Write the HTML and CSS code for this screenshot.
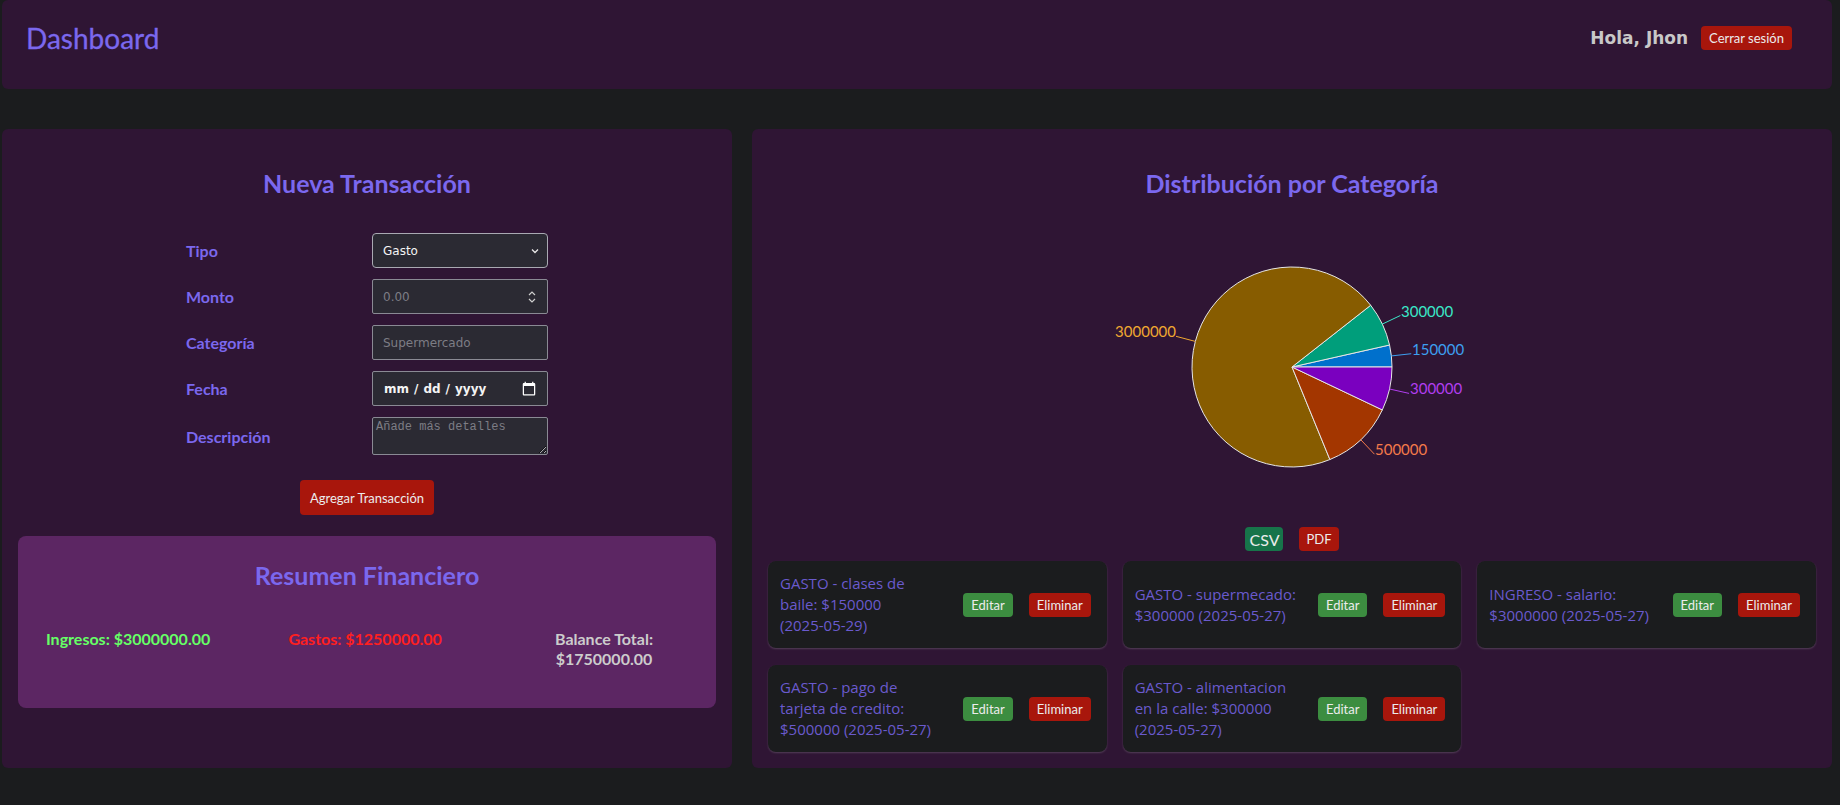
FILE: index.html
```html
<!DOCTYPE html>
<html lang="es">
<head>
<meta charset="utf-8">
<title>Dashboard</title>
<link rel="stylesheet" href="styles.css">
</head>
<body>
<div class="app">
  <header class="topbar">
    <h1 class="brand">Dashboard</h1>
    <div class="user">
      <span class="hello">Hola, Jhon</span>
      <button class="btn btn-red btn-sm" type="button">Cerrar sesión</button>
    </div>
  </header>

  <main class="main">
    <section class="panel panel-left">
      <h2 class="panel-title">Nueva Transacción</h2>
      <form class="tx-form">
        <label class="field-label" for="tipo">Tipo</label>
        <div class="control">
          <select id="tipo" class="field field-select"><option>Gasto</option><option>Ingreso</option></select>
          <svg class="field-icon chev" width="10" height="10" viewBox="0 0 10 10"><path d="M2 3.5 L5 6.5 L8 3.5" fill="none" stroke="#e8e8e8" stroke-width="1.3"/></svg>
        </div>

        <label class="field-label" for="monto">Monto</label>
        <div class="control">
          <input id="monto" class="field field-number" type="number" placeholder="0.00">
          <svg class="field-icon spin" width="10" height="16" viewBox="0 0 10 16"><path d="M2 6 L5 3 L8 6 M2 10 L5 13 L8 10" fill="none" stroke="#cfcfcf" stroke-width="1.2"/></svg>
        </div>

        <label class="field-label" for="cat">Categoría</label>
        <div class="control">
          <input id="cat" class="field" type="text" placeholder="Supermercado">
        </div>

        <label class="field-label" for="fecha">Fecha</label>
        <div class="control">
          <input id="fecha" class="field field-date" type="date">
        </div>

        <label class="field-label" for="desc">Descripción</label>
        <div class="control">
          <textarea id="desc" class="field field-area" placeholder="Añade más detalles"></textarea>
        </div>
      </form>
      <div class="form-actions">
        <button class="btn btn-red btn-lg" type="button">Agregar Transacción</button>
      </div>

      <div class="summary">
        <h3 class="summary-title">Resumen Financiero</h3>
        <div class="stats">
          <p class="stat stat-in">Ingresos: $3000000.00</p>
          <p class="stat stat-out">Gastos: $1250000.00</p>
          <p class="stat stat-bal">Balance Total: $1750000.00</p>
        </div>
      </div>
    </section>

    <section class="panel panel-right">
      <h2 class="panel-title">Distribución por Categoría</h2>
      <div class="chart">
        <svg class="pie" width="500" height="300" viewBox="0 0 500 300">
          <g stroke="#e6e6e6" stroke-width="1">
            <path d="M250,150 L350,150 A100,100 0 0 0 347.551,128.005 Z" fill="#0070cc"/>
            <path d="M250,150 L347.551,128.005 A100,100 0 0 0 328.674,88.273 Z" fill="#009e7b"/>
            <path d="M250,150 L328.674,88.273 A100,100 0 1 0 287.893,242.542 Z" fill="#875c00"/>
            <path d="M250,150 L287.893,242.542 A100,100 0 0 0 340.325,192.910 Z" fill="#a33600"/>
            <path d="M250,150 L340.325,192.910 A100,100 0 0 0 350,150 Z" fill="#7a00bf"/>
          </g>
          <g fill="none" stroke-width="1">
            <polyline points="349.386,138.935 369.263,136.722" stroke="#3d9ff0"/>
            <polyline points="340.325,107.090 358.390,98.508" stroke="#3ae8c8"/>
            <polyline points="153.328,124.416 133.994,119.299" stroke="#f0a830"/>
            <polyline points="318.709,222.658 332.451,237.190" stroke="#f47a4a"/>
            <polyline points="347.551,171.995 367.061,176.394" stroke="#b23ef0"/>
          </g>
          <g class="pie-labels">
            <text x="370" y="132" fill="#3d9ff0">150000</text>
            <text x="359" y="94" fill="#3ae8c8">300000</text>
            <text x="134" y="114" fill="#f0a830" text-anchor="end">3000000</text>
            <text x="333" y="232" fill="#f47a4a">500000</text>
            <text x="368" y="171" fill="#b23ef0">300000</text>
          </g>
        </svg>
      </div>
      <div class="exports">
        <button class="btn btn-csv" type="button">CSV</button>
        <button class="btn btn-red btn-pdf" type="button">PDF</button>
      </div>

      <div class="tx-grid">
        <div class="tx-card">
          <p class="tx-text"><span>GASTO - clases de baile: $150000</span> <span class="tx-keep">(2025-05-29)</span></p>
          <div class="tx-actions"><button class="btn btn-green" type="button">Editar</button><button class="btn btn-red" type="button">Eliminar</button></div>
        </div>
        <div class="tx-card">
          <p class="tx-text"><span>GASTO - supermecado:</span> <span class="tx-keep">$300000 (2025-05-27)</span></p>
          <div class="tx-actions"><button class="btn btn-green" type="button">Editar</button><button class="btn btn-red" type="button">Eliminar</button></div>
        </div>
        <div class="tx-card">
          <p class="tx-text"><span>INGRESO - salario:</span> <span class="tx-keep">$3000000 (2025-05-27)</span></p>
          <div class="tx-actions"><button class="btn btn-green" type="button">Editar</button><button class="btn btn-red" type="button">Eliminar</button></div>
        </div>
        <div class="tx-card">
          <p class="tx-text"><span>GASTO - pago de tarjeta de credito:</span> <span class="tx-keep">$500000 (2025-05-27)</span></p>
          <div class="tx-actions"><button class="btn btn-green" type="button">Editar</button><button class="btn btn-red" type="button">Eliminar</button></div>
        </div>
        <div class="tx-card">
          <p class="tx-text"><span>GASTO - alimentacion en la calle: $300000</span> <span class="tx-keep">(2025-05-27)</span></p>
          <div class="tx-actions"><button class="btn btn-green" type="button">Editar</button><button class="btn btn-red" type="button">Eliminar</button></div>
        </div>
      </div>
    </section>
  </main>
</div>
</body>
</html>
```

FILE: styles.css
```css
html, body {
  margin: 0;
  background: #1b1c1e;
}

body {
  font-family: Lato, "Open Sans", sans-serif;
  color: #e0e0e0;
}

.app {
  padding: 0 8px 0 2px;
}

/* ---------- header ---------- */
.topbar {
  height: 89px;
  box-sizing: border-box;
  display: flex;
  align-items: center;
  justify-content: space-between;
  padding: 0 40px 13px 24px;
  background: #2f1534;
  border-radius: 6px;
}

.brand {
  margin: 0;
  font-size: 28px;
  font-weight: 400;
  line-height: 36px;
  color: #7b68ee;
  -webkit-text-stroke: 0.3px #7b68ee;
}

.user {
  display: flex;
  align-items: center;
  gap: 13px;
}

.hello {
  font-family: "DejaVu Sans", Verdana, sans-serif;
  font-weight: 700;
  font-size: 17px;
  color: #c8c8c8;
}

/* ---------- buttons ---------- */
.btn {
  border: 0;
  border-radius: 4px;
  color: #ececec;
  font-family: Lato, "Open Sans", sans-serif;
  font-size: 13px;
  height: 24px;
  padding: 0 8px;
  cursor: pointer;
}

.btn-red { background: #a8160c; }
.btn-green { background: #3c8d40; }

.btn-csv {
  background: #17744a;
  font-size: 16px;
  padding: 0 4px;
}

.btn-pdf {
  padding: 0 7px;
}

.btn-lg {
  height: 35px;
  padding: 0 10px;
}

/* ---------- layout ---------- */
.main {
  display: flex;
  gap: 20px;
  margin-top: 40px;
  align-items: stretch;
}

.panel {
  background: #2f1534;
  border-radius: 6px;
  padding: 16px;
  box-sizing: border-box;
}

.panel-left {
  flex: 0 0 730px;
}

.panel-right {
  flex: 1;
  min-width: 0;
}

.panel-title {
  margin: 22px 0 0;
  font-size: 25px;
  line-height: 32px;
  font-weight: 700;
  text-align: center;
  color: #7b68ee;
}

/* ---------- form ---------- */
.tx-form {
  width: 362px;
  margin: 34px auto 0;
  display: grid;
  grid-template-columns: 176px 176px;
  column-gap: 10px;
  row-gap: 11px;
}

.field-label {
  align-self: center;
  font-weight: 700;
  font-size: 16px;
  color: #7b68ee;
}

.control {
  position: relative;
}

.field {
  display: block;
  width: 100%;
  height: 35px;
  box-sizing: border-box;
  margin: 0;
  padding: 0 10px;
  background: #2b2a33;
  border: 1px solid #8a8a94;
  border-radius: 2px;
  color: #f4f4f4;
  font-family: "DejaVu Sans", Verdana, sans-serif;
  font-size: 12px;
  color-scheme: dark;
  outline: none;
}

.field::placeholder {
  color: #7d7d85;
}

.field-select {
  appearance: none;
  -webkit-appearance: none;
  border-color: #a9a9b2;
  border-radius: 4px;
}

.field-number {
  -moz-appearance: textfield;
}

.field-number::-webkit-inner-spin-button,
.field-number::-webkit-outer-spin-button {
  -webkit-appearance: none;
  margin: 0;
}

.field-date {
  padding: 0 8px 0 10px;
  font-weight: 700;
}

.field-date::-webkit-datetime-edit-text {
  padding: 0 4px;
}

.field-date::-webkit-calendar-picker-indicator {
  width: 16px;
  height: 16px;
}

.field-area {
  height: 38px;
  padding: 2px 3px;
  resize: both;
  font-family: "Liberation Mono", "DejaVu Sans Mono", monospace;
  font-size: 12px;
}

.field-icon {
  position: absolute;
  right: 8px;
  top: 50%;
  transform: translateY(-50%);
  pointer-events: none;
}

.spin {
  right: 11px;
}

.form-actions {
  display: flex;
  justify-content: center;
  margin-top: 25px;
}

/* ---------- summary ---------- */
.summary {
  margin-top: 21px;
  background: #5c2663;
  border-radius: 8px;
  padding: 20px 28px 20px;
}

.summary-title {
  margin: 3px 0 0;
  font-size: 25px;
  line-height: 32px;
  font-weight: 700;
  text-align: center;
  color: #7b68ee;
}

.stats {
  display: flex;
  justify-content: space-between;
  align-items: flex-start;
  margin: 38px 0 19px;
}

.stat {
  margin: 0;
  font-size: 16px;
  line-height: 20px;
  font-weight: 700;
}

.stat-in { color: #66ff66; }
.stat-out { color: #ff1f1f; }

.stat-bal {
  width: 168px;
  text-align: center;
  color: #cccccc;
}

/* ---------- chart ---------- */
.chart {
  margin-top: 18px;
  display: flex;
  justify-content: center;
}

.pie {
  display: block;
}

.pie-labels text {
  font-family: Lato, "Open Sans", sans-serif;
  font-size: 15px;
  dominant-baseline: central;
}

.exports {
  display: flex;
  justify-content: center;
  gap: 16px;
  margin-top: 10px;
}

/* ---------- transactions ---------- */
.tx-grid {
  margin-top: 10px;
  display: grid;
  grid-template-columns: repeat(3, 1fr);
  column-gap: 16px;
  row-gap: 17px;
}

.tx-card {
  display: flex;
  align-items: center;
  min-height: 87px;
  box-sizing: border-box;
  padding: 12px 16px 12px 12px;
  background: #1b1c1e;
  border-radius: 8px;
  box-shadow: 0 1px 2px rgba(255, 255, 255, 0.18);
}

.tx-text {
  flex: 1;
  max-width: 163px;
  margin: 0;
  font-family: "Open Sans", Lato, sans-serif;
  font-size: 15px;
  line-height: 21px;
  color: #6a5acd;
}

.tx-keep {
  white-space: nowrap;
}

.tx-actions {
  display: flex;
  gap: 16px;
  flex-shrink: 0;
  margin-left: auto;
}
```
